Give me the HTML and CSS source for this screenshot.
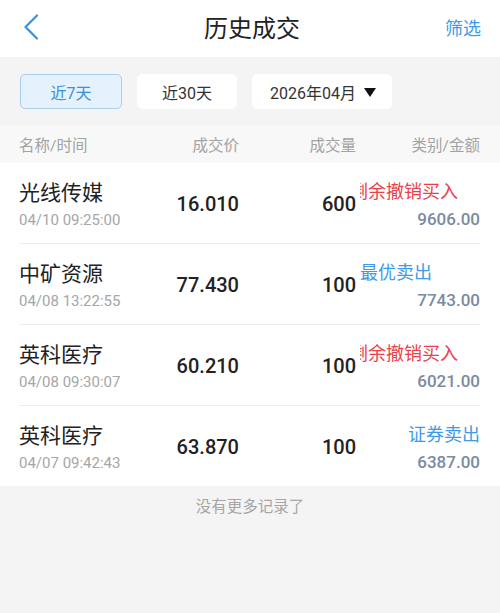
FILE: index.html
```html
<!DOCTYPE html>
<html lang="zh-CN">
<head>
<meta charset="utf-8">
<title>历史成交</title>
<link rel="stylesheet" href="styles.css">
</head>
<body>
<div class="page">
  <header class="topbar">
    <span class="back">
      <svg width="16" height="26" viewBox="0 0 16 26"><polyline points="14,1.5 2.5,13 14,24.5" fill="none" stroke="#3a90d9" stroke-width="2.2" stroke-linecap="round" stroke-linejoin="round"/></svg>
    </span>
    <h1 class="title">历史成交</h1>
    <span class="filter">筛选</span>
  </header>

  <div class="tabs">
    <button class="tab tab-active tab-7">近7天</button>
    <button class="tab tab-30">近30天</button>
    <button class="tab tab-month">2026年04月
      <svg class="caret" width="12" height="9" viewBox="0 0 12 9"><polygon points="0,0 12,0 6,9" fill="#111"/></svg>
    </button>
  </div>

  <div class="colhead">
    <span class="c-name">名称/时间</span>
    <span class="c-price">成交价</span>
    <span class="c-vol">成交量</span>
    <span class="c-type">类别/金额</span>
  </div>

  <div class="list">
    <div class="row">
      <div class="cell-name"><div class="name">光线传媒</div><div class="time">04/10 09:25:00</div></div>
      <div class="price">16.010</div>
      <div class="vol">600</div>
      <div class="cell-type"><div class="type red scrolled">剩余撤销买入</div><div class="amount">9606.00</div></div>
    </div>
    <div class="row">
      <div class="cell-name"><div class="name">中矿资源</div><div class="time">04/08 13:22:55</div></div>
      <div class="price">77.430</div>
      <div class="vol">100</div>
      <div class="cell-type"><div class="type blue">最优卖出</div><div class="amount">7743.00</div></div>
    </div>
    <div class="row">
      <div class="cell-name"><div class="name">英科医疗</div><div class="time">04/08 09:30:07</div></div>
      <div class="price">60.210</div>
      <div class="vol">100</div>
      <div class="cell-type"><div class="type red scrolled">剩余撤销买入</div><div class="amount">6021.00</div></div>
    </div>
    <div class="row last">
      <div class="cell-name"><div class="name">英科医疗</div><div class="time">04/07 09:42:43</div></div>
      <div class="price">63.870</div>
      <div class="vol">100</div>
      <div class="cell-type"><div class="type blue right">证券卖出</div><div class="amount">6387.00</div></div>
    </div>
  </div>

  <div class="footer">没有更多记录了</div>
</div>
</body>
</html>
```
FILE: styles.css
```css
* { box-sizing: border-box; }
html, body { margin: 0; padding: 0; }
body {
  width: 500px;
  height: 613px;
  background: #f4f4f4;
  font-family: Roboto, "Noto Sans CJK SC", sans-serif;
  color: #222;
  overflow: hidden;
}
.page { display: flex; flex-direction: column; height: 613px; }

.topbar {
  height: 57px;
  background: #fff;
  display: grid;
  grid-template-columns: 1fr auto 1fr;
  align-items: center;
  padding: 0 19px 0 23px;
}
.back { display: flex; align-items: center; padding-bottom: 3px; }
.title {
  margin: 0;
  font-size: 24px;
  font-weight: 400;
  color: #222;
  line-height: 1;
  padding-top: 1px;
}
.filter {
  justify-self: end;
  font-size: 18px;
  color: #3d9be9;
  padding-bottom: 3px;
}

.tabs {
  display: flex;
  gap: 15px;
  padding: 17px 20px 16px;
  background: #f4f4f4;
}
.tab {
  height: 35px;
  border: 1px solid #ffffff;
  background: #fff;
  border-radius: 5px;
  font-family: Roboto, "Noto Sans CJK SC", sans-serif;
  font-size: 16px;
  color: #333;
  padding: 0;
  display: flex;
  align-items: center;
  justify-content: center;
}
.tab-7 { width: 102px; }
.tab-30 { width: 100px; }
.tab-month { width: 140px; gap: 8px; padding-left: 2px; }
.tab-active {
  background: #e5f1fc;
  border-color: #a9cfee;
  color: #3a90d9;
}
.caret { display: block; margin-top: 1px; }

.colhead {
  height: 38px;
  background: #f8f8f8;
  display: grid;
  grid-template-columns: 151px 69px 117px 1fr;
  align-items: center;
  padding: 0 20px 0 19px;
  font-size: 15.5px;
  color: #a3a3a3;
}
.c-price, .c-vol { text-align: right; }
.c-type { text-align: right; }

.list { background: #fff; }
.row {
  height: 81px;
  margin: 0 20px 0 19px;
  border-bottom: 1px solid #ececec;
  display: grid;
  grid-template-columns: 151px 69px 117px 1fr;
  align-items: center;
}
.row.last { border-bottom: none; height: 80px; }

.cell-name { align-self: start; padding-top: 16px; }
.name { font-size: 21px; line-height: 28px; color: #222; }
.time { font-size: 15px; line-height: 26px; color: #a6a6a6; white-space: nowrap; }

.price, .vol {
  text-align: right;
  font-size: 20px;
  font-weight: 500;
  color: #222;
  padding-top: 1px;
}

.cell-type {
  align-self: start;
  padding-top: 16px;
  margin-left: 4px;
  overflow: hidden;
  display: flex;
  flex-direction: column;
}
.type {
  font-size: 18px;
  line-height: 26px;
  white-space: nowrap;
}
.type.red { color: #e8414c; }
.type.blue { color: #3d9be9; }
.type.scrolled { margin-left: -10px; }
.type.right { text-align: right; }
.amount {
  text-align: right;
  font-size: 17px;
  line-height: 28px;
  font-weight: 500;
  color: #7a8ba0;
}

.footer {
  flex: 1;
  background: #f4f4f4;
  text-align: center;
  font-size: 15.5px;
  color: #a6a6a6;
  padding-top: 8px;
}
```
